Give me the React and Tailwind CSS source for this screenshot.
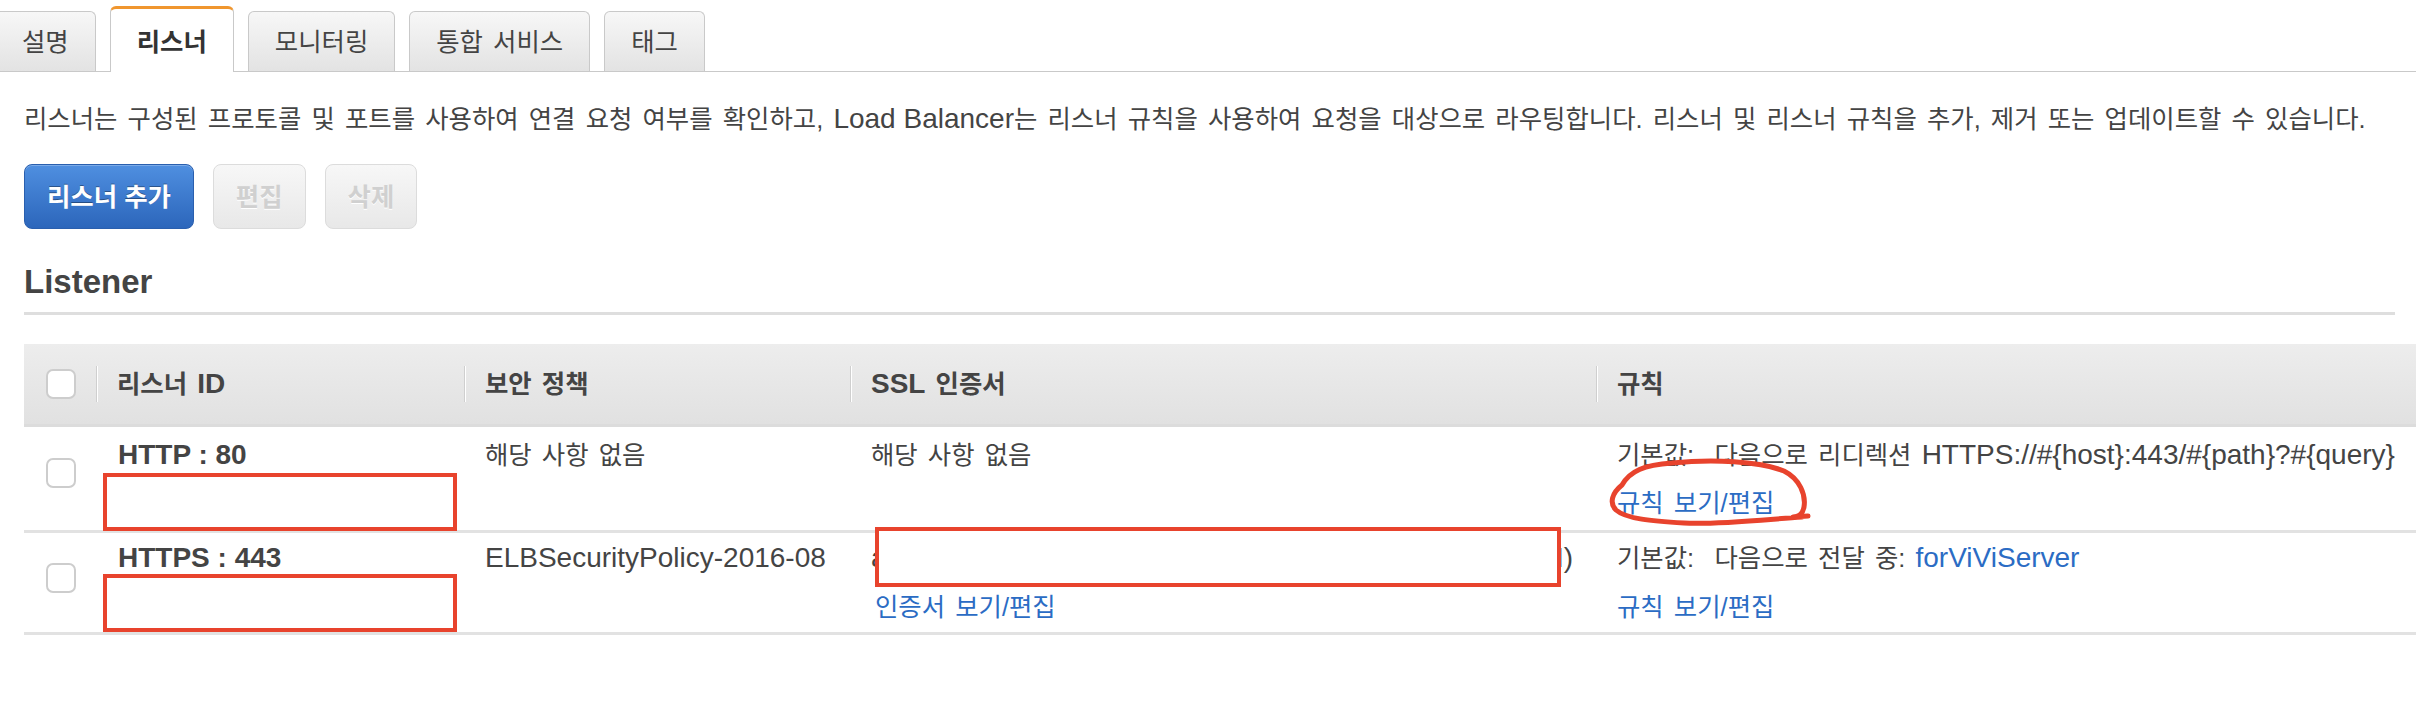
import React from 'react';

const tabs = ['설명', '리스너', '모니터링', '통합 서비스', '태그'];

// latin runs sit at 28px, hangul runs at the base size
function E({ children, className = '' }) {
  return <span className={`text-[28px] [word-spacing:0px] ${className}`}>{children}</span>;
}

function Tab({ label, active }) {
  if (active) {
    return (
      <div className="-mb-px flex h-[66px] items-center rounded-t-[6px] border-x border-t-[3px] border-x-[#c9c9c9] border-t-[#f0962e] bg-white px-[26px] pt-[3px] font-bold text-[#333]">
        {label}
      </div>
    );
  }
  return (
    <div className="flex h-[60px] items-center rounded-t-[6px] border-x border-t border-[#c9c9c9] bg-linear-to-b from-[#f7f7f7] to-[#e3e3e3] px-[26px] text-[#444]">
      {label}
    </div>
  );
}

function Check() {
  return <div className="h-[30px] w-[30px] rounded-[7px] border-2 border-[#cdcdcd] bg-white" />;
}

function Head({ children }) {
  return (
    <div className="flex items-center">
      <div className="h-[36px] w-px bg-[#cfcfcf] shadow-[1px_0_0_#fff]" />
      <div className="ml-5 font-bold text-[#444]">{children}</div>
    </div>
  );
}

function RedBox({ className }) {
  return <div className={`absolute border-4 border-[#e8432d] ${className}`} />;
}

const cols = 'grid grid-cols-[72px_368px_386px_746px_1fr]';

export default function App() {
  return (
    <div className="min-h-screen bg-white font-['Liberation_Sans','Noto_Sans_CJK_KR',sans-serif] text-[25.4px] leading-[32px] text-[#444] [word-spacing:3.1px]">
      <div className="flex h-[72px] items-end border-b border-[#c9c9c9]">
        <div className="-ml-[5px] flex items-end gap-[14px]">
          {tabs.map((t) => (
            <Tab key={t} label={t} active={t === '리스너'} />
          ))}
        </div>
      </div>

      <div className="pl-6">
        <p className="mt-[31px] whitespace-nowrap">
          리스너는 구성된 프로토콜 및 포트를 사용하여 연결 요청 여부를 확인하고, <E>Load Balancer</E>는 리스너 규칙을 사용하여 요청을 대상으로 라우팅합니다. 리스너 및 리스너 규칙을 추가, 제거 또는 업데이트할 수 있습니다.
        </p>

        <div className="mt-[29px] flex gap-[19px]">
          <button className="h-[65px] rounded-[8px] border border-[#2a5fae] bg-linear-to-b from-[#4f8fe0] to-[#2c66bb] px-[22px] font-bold text-white shadow-[inset_0_1px_0_rgba(255,255,255,0.25)] [text-shadow:0_-1px_0_rgba(0,0,0,0.35)]">
            리스너 추가
          </button>
          <button className="h-[65px] rounded-[8px] border border-[#dcdcdc] bg-linear-to-b from-[#f7f7f7] to-[#e8e8e8] px-[22px] font-bold text-[#d0d0d0] [text-shadow:0_1px_0_#fff]">
            편집
          </button>
          <button className="h-[65px] rounded-[8px] border border-[#dcdcdc] bg-linear-to-b from-[#f7f7f7] to-[#e8e8e8] px-[22px] font-bold text-[#d0d0d0] [text-shadow:0_1px_0_#fff]">
            삭제
          </button>
        </div>

        <h2 className="mr-[21px] mt-[36px] border-b-[3px] border-[#dedede] pb-[14px] text-[33px] font-bold leading-[33px] text-[#444]">
          Listener
        </h2>

        <div className="mt-[29px] whitespace-nowrap">
          <div className={`${cols} h-[83px] border-b-[3px] border-[#dcdcdc] bg-linear-to-b from-[#ededed] to-[#e1e1e1]`}>
            <div className="flex items-center pl-[22px]">
              <Check />
            </div>
            <Head>
              리스너 <E>ID</E>
            </Head>
            <Head>보안 정책</Head>
            <Head>
              <E>SSL</E> 인증서
            </Head>
            <Head>규칙</Head>
          </div>

          <div className={`${cols} h-[106px] border-b-[3px] border-[#e2e2e2]`}>
            <div className="pl-[22px] pt-[31px]">
              <Check />
            </div>
            <div className="relative pl-[22px] pt-[12px]">
              <E className="font-bold">HTTP : 80</E>
              <RedBox className="left-[7px] top-[46px] h-[58px] w-[354px]" />
            </div>
            <div className="pl-[21px] pt-[12px]">해당 사항 없음</div>
            <div className="pl-[21px] pt-[12px]">해당 사항 없음</div>
            <div className="relative pl-[21px] pt-[12px]">
              <div>
                기본값:{'\u00a0 '}다음으로 리디렉션 <E>{'HTTPS://#{host}:443/#{path}?#{query}'}</E>
              </div>
              <div className="mt-4 text-[#2b6cc4]">규칙 보기/편집</div>
              <svg className="absolute left-[4px] top-[28px]" width="215" height="75" viewBox="0 0 215 75" fill="none">
                <path
                  d="M22 30 C30 16 44 10 72 8 C112 4 160 6 184 16 C200 24 206 40 204 52 C203 58 199 62 193 62 L208 61 M202 62 C160 65 112 70 84 68 C52 66 26 64 16 55 C9 48 12 38 22 30"
                  stroke="#e8432d"
                  strokeWidth="5"
                  strokeLinecap="round"
                  strokeLinejoin="round"
                />
              </svg>
            </div>
          </div>

          <div className={`${cols} h-[102px] border-b-[3px] border-[#e2e2e2]`}>
            <div className="pl-[22px] pt-[30px]">
              <Check />
            </div>
            <div className="relative pl-[22px] pt-[9px]">
              <E className="font-bold">HTTPS : 443</E>
              <RedBox className="left-[7px] top-[41px] h-[58px] w-[354px]" />
            </div>
            <div className="pl-[21px] pt-[9px]">
              <E>ELBSecurityPolicy-2016-08</E>
            </div>
            <div className="relative pl-[21px] pt-[9px]">
              <div className="flex w-[702px] justify-between">
                <E>a</E>
                <E>(ACM)</E>
              </div>
              <div className="mt-[17px] pl-[4px] text-[#2b6cc4]">인증서 보기/편집</div>
              <RedBox className="left-[25px] top-[-6px] h-[60px] w-[686px] bg-white" />
            </div>
            <div className="pl-[21px] pt-[9px]">
              <div>
                기본값:{'\u00a0 '}다음으로 전달 중: <E className="text-[#2b6cc4]">forViViServer</E>
              </div>
              <div className="mt-[17px] text-[#2b6cc4]">규칙 보기/편집</div>
            </div>
          </div>
        </div>
      </div>
    </div>
  );
}
